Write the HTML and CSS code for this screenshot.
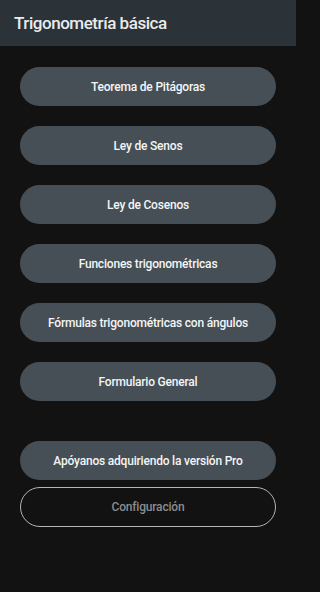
FILE: index.html
```html
<!DOCTYPE html>
<html lang="es">
<head>
<meta charset="utf-8">
<link rel="stylesheet" href="styles.css">
</head>
<body>
<header class="appbar"><h1 class="title">Trigonometría básica</h1></header>
<main class="menu">
  <button class="btn">Teorema de Pitágoras</button>
  <button class="btn">Ley de Senos</button>
  <button class="btn">Ley de Cosenos</button>
  <button class="btn">Funciones trigonométricas</button>
  <button class="btn">Fórmulas trigonométricas con ángulos</button>
  <button class="btn">Formulario General</button>
  <div class="bottom">
    <button class="btn">Apóyanos adquiriendo la versión Pro</button>
    <button class="btn outline">Configuración</button>
  </div>
</main>
</body>
</html>
```
FILE: styles.css
```css
html, body { margin: 0; padding: 0; }
html { background: #121212; }
body {
  background: #121212;
  font-family: Roboto, "Noto Sans", sans-serif;
  width: 296px;
  min-height: 592px;
}
.appbar {
  height: 46px;
  background: #2b3338;
  display: flex;
  align-items: center;
  padding: 0 14px;
  box-sizing: border-box;
}
.title {
  margin: 0;
  font-size: 17px;
  font-weight: 500;
  color: #e9ebed;
  letter-spacing: -0.45px;
}
.menu {
  display: flex;
  flex-direction: column;
  gap: 20px;
  padding: 21px 20px 0;
}
.btn {
  height: 39px;
  border: none;
  border-radius: 20px;
  background: #454f55;
  color: #f4f5f6;
  font-family: Roboto, "Noto Sans", sans-serif;
  font-size: 12px;
  font-weight: 500;
  letter-spacing: -0.2px;
  padding: 0;
}
.bottom {
  display: flex;
  flex-direction: column;
  gap: 7px;
  margin-top: 20px;
}
.outline {
  background: transparent;
  border: 1px solid #b5b5b5;
  color: #8c8c8c;
  height: 40px;
}
```
